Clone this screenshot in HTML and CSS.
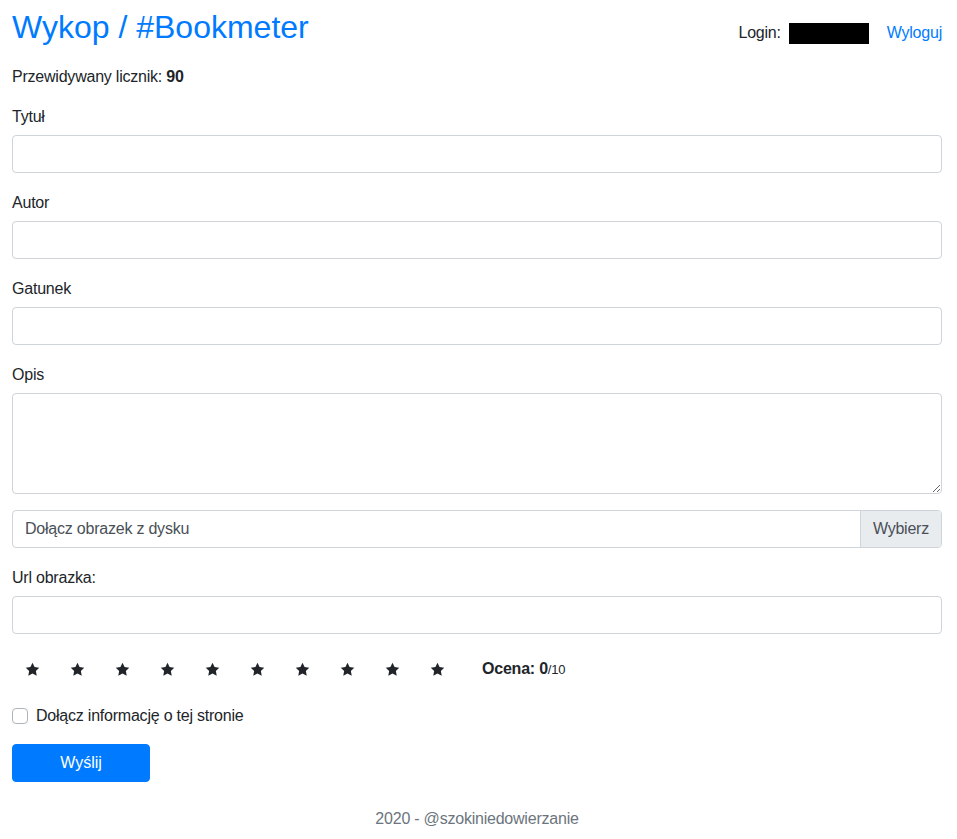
FILE: index.html
```html
<!DOCTYPE html>
<html lang="pl">
<head>
<meta charset="utf-8">
<title>Wykop / #Bookmeter</title>
<link rel="stylesheet" href="styles.css">
</head>
<body>
<div class="page">
  <header class="header">
    <h1 class="brand">Wykop / #Bookmeter</h1>
    <div class="user">
      <span class="login">Login: <span class="redacted"></span></span>
      <a class="logout" href="#">Wyloguj</a>
    </div>
  </header>
  <p class="counter">Przewidywany licznik: <b>90</b></p>
  <form class="form">
    <div class="group">
      <label class="label">Tytuł</label>
      <input class="control" type="text">
    </div>
    <div class="group">
      <label class="label">Autor</label>
      <input class="control" type="text">
    </div>
    <div class="group">
      <label class="label">Gatunek</label>
      <input class="control" type="text">
    </div>
    <div class="group">
      <label class="label">Opis</label>
      <textarea class="control area"></textarea>
    </div>
    <div class="group file">
      <span class="file-text">Dołącz obrazek z dysku</span>
      <span class="file-btn">Wybierz</span>
    </div>
    <div class="group">
      <label class="label">Url obrazka:</label>
      <input class="control" type="text">
    </div>
    <div class="rating">
      <div class="stars">
        <svg class="star" viewBox="0 0 16 16"><path d="M8 .8l2.2 4.6 5 .7-3.6 3.5.9 5L8 12.2l-4.5 2.4.9-5L.8 6.1l5-.7z"/></svg>
        <svg class="star" viewBox="0 0 16 16"><path d="M8 .8l2.2 4.6 5 .7-3.6 3.5.9 5L8 12.2l-4.5 2.4.9-5L.8 6.1l5-.7z"/></svg>
        <svg class="star" viewBox="0 0 16 16"><path d="M8 .8l2.2 4.6 5 .7-3.6 3.5.9 5L8 12.2l-4.5 2.4.9-5L.8 6.1l5-.7z"/></svg>
        <svg class="star" viewBox="0 0 16 16"><path d="M8 .8l2.2 4.6 5 .7-3.6 3.5.9 5L8 12.2l-4.5 2.4.9-5L.8 6.1l5-.7z"/></svg>
        <svg class="star" viewBox="0 0 16 16"><path d="M8 .8l2.2 4.6 5 .7-3.6 3.5.9 5L8 12.2l-4.5 2.4.9-5L.8 6.1l5-.7z"/></svg>
        <svg class="star" viewBox="0 0 16 16"><path d="M8 .8l2.2 4.6 5 .7-3.6 3.5.9 5L8 12.2l-4.5 2.4.9-5L.8 6.1l5-.7z"/></svg>
        <svg class="star" viewBox="0 0 16 16"><path d="M8 .8l2.2 4.6 5 .7-3.6 3.5.9 5L8 12.2l-4.5 2.4.9-5L.8 6.1l5-.7z"/></svg>
        <svg class="star" viewBox="0 0 16 16"><path d="M8 .8l2.2 4.6 5 .7-3.6 3.5.9 5L8 12.2l-4.5 2.4.9-5L.8 6.1l5-.7z"/></svg>
        <svg class="star" viewBox="0 0 16 16"><path d="M8 .8l2.2 4.6 5 .7-3.6 3.5.9 5L8 12.2l-4.5 2.4.9-5L.8 6.1l5-.7z"/></svg>
        <svg class="star" viewBox="0 0 16 16"><path d="M8 .8l2.2 4.6 5 .7-3.6 3.5.9 5L8 12.2l-4.5 2.4.9-5L.8 6.1l5-.7z"/></svg>
      </div>
      <span class="score"><b>Ocena: 0</b><small>/10</small></span>
    </div>
    <label class="check">
      <span class="box"></span>
      <span>Dołącz informację o tej stronie</span>
    </label>
    <button class="btn" type="button">Wyślij</button>
  </form>
  <footer class="footer">2020 - @szokiniedowierzanie</footer>
</div>
</body>
</html>
```
FILE: styles.css
```css
* { box-sizing: border-box; }
html, body { margin: 0; }
body {
  font-family: "Liberation Sans", Arial, sans-serif;
  font-size: 16px;
  line-height: 24px;
  letter-spacing: -0.22px;
  color: #212529;
  background: #fff;
}
.page { padding: 8px 15px 0 12px; }
.header {
  display: flex;
  justify-content: space-between;
  align-items: flex-start;
}
.brand {
  margin: 0;
  font-size: 32px;
  line-height: 38px;
  font-weight: 400;
  letter-spacing: 0;
  color: #007bff;
}
.user {
  display: flex;
  align-items: center;
  padding-top: 13px;
}
.login { display: flex; align-items: center; }
.redacted {
  display: inline-block;
  width: 80px;
  height: 21px;
  background: #000;
  margin-left: 8px;
}
.logout {
  color: #007bff;
  text-decoration: none;
  margin-left: 18px;
}
.counter { margin: 19px 0 14px; }
.form { margin: 0; }
.group { margin-bottom: 16px; }
.label { display: block; padding-top: 2px; margin-bottom: 6px; }
.control {
  display: block;
  width: 100%;
  height: 38px;
  padding: 6px 12px;
  font: inherit;
  color: #495057;
  border: 1px solid #ced4da;
  border-radius: 4px;
  background: #fff;
}
.area { height: 101px; resize: vertical; }
.file {
  display: flex;
  height: 38px;
  border: 1px solid #ced4da;
  border-radius: 4px;
  overflow: hidden;
  margin-top: 16px;
  margin-bottom: 16px;
}
.file-text {
  flex: 1;
  padding: 6px 12px;
  color: #495057;
}
.file-btn {
  padding: 6px 12px;
  background: #e9ecef;
  border-left: 1px solid #ced4da;
  color: #495057;
}
.rating {
  display: flex;
  align-items: center;
  height: 38px;
  margin-top: 16px;
}
.stars { display: flex; padding-left: 13px; }
.star {
  width: 15px;
  height: 15px;
  fill: #212529;
  margin-right: 30px;
}
.score { margin-left: 7px; }
.score small { font-size: 13px; }
.check {
  display: flex;
  align-items: center;
  margin-top: 16px;
}
.box {
  width: 16px;
  height: 16px;
  border: 1px solid #adb5bd;
  border-radius: 4px;
  margin-right: 8px;
}
.btn {
  display: block;
  width: 138px;
  height: 38px;
  margin-top: 16px;
  font: inherit;
  color: #fff;
  background: #007bff;
  border: 1px solid #007bff;
  border-radius: 4px;
}
.footer {
  text-align: center;
  color: #6c757d;
  margin-top: 25px;
}
```
